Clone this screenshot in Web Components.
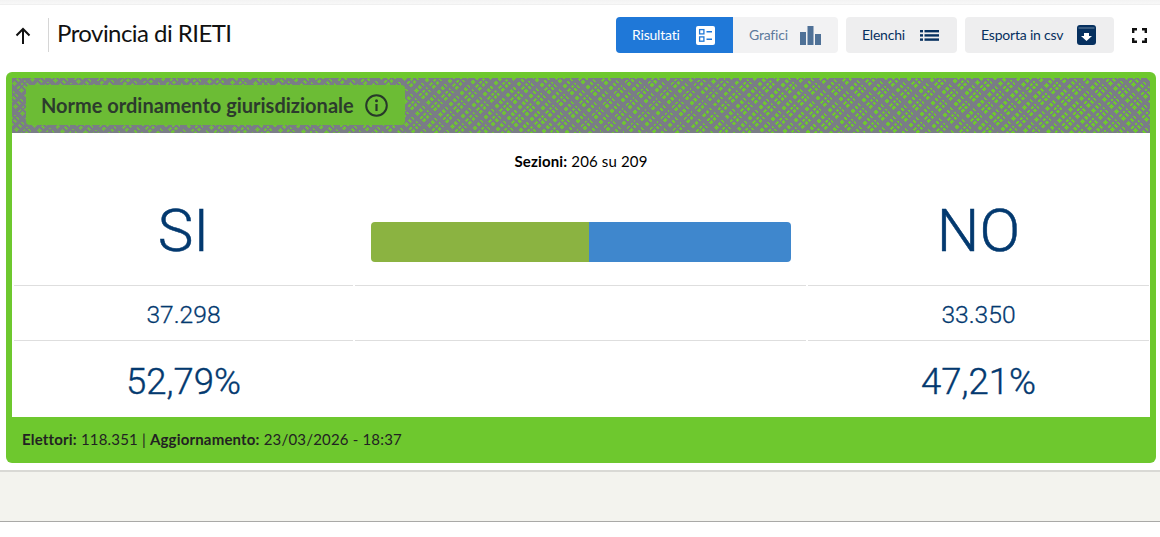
<!DOCTYPE html>
<html lang="it">
<head>
<meta charset="utf-8">
<title>Provincia di RIETI</title>
<style>
    html, body { margin: 0; padding: 0; background: #fff; }
    body { font-family: Lato, "Open Sans", sans-serif; color: #111; }
</style>
</head>
<body>
<page-view>
    <page-toolbar slot="toolbar" heading="Provincia di RIETI">
        <tool-button kind="active" icon="results" style="width:117px">Risultati</tool-button>
        <tool-button kind="muted" icon="bars" class="joined" style="width:105px">Grafici</tool-button>
        <tool-button icon="list" style="width:111px">Elenchi</tool-button>
        <tool-button icon="archive" style="width:149px">Esporta in csv</tool-button>
    </page-toolbar>
    <result-card slot="card" heading="Norme ordinamento giurisdizionale">
        <vote-table yes="37.298" no="33.350" yes-pct="52,79%" no-pct="47,21%"></vote-table>
        <span slot="footer"><b>Elettori:</b> 118.351 | <b>Aggiornamento:</b> 23/03/2026 - 18:37</span>
    </result-card>
</page-view>

<script>
const ICONS = {
    up: `<svg width="18" height="18" viewBox="0 0 18 18" fill="none" stroke="#111" stroke-width="2"><path d="M9 17V2M2.500 8.500 9 2l6.500 6.500"/></svg>`,
    results: `<svg width="19" height="19" viewBox="0 0 19 19"><rect width="19" height="19" rx="2" fill="#fff"/><g fill="none" stroke="#1f78d8" stroke-width="1.300"><rect x="3.600" y="3.600" width="4.300" height="4.300"/><rect x="3.600" y="10.900" width="4.300" height="4.300"/></g><path d="M10.500 5h5.500v1.600h-5.500zM10.500 12.400h5.500V14h-5.500z" fill="#1f78d8"/></svg>`,
    bars: `<svg width="21" height="19" viewBox="0 0 21 19" fill="#4f7197"><rect y="6" width="6" height="13"/><rect x="7.500" width="6" height="19"/><rect x="15" y="8" width="6" height="11"/></svg>`,
    list: `<svg width="19" height="11" viewBox="0 0 19 11" fill="#06305f"><rect y="0" width="3" height="2.400"/><rect y="4.200" width="3" height="2.400"/><rect y="8.400" width="3" height="2.400"/><rect x="4.500" y="0" width="14.500" height="2.400"/><rect x="4.500" y="4.200" width="14.500" height="2.400"/><rect x="4.500" y="8.400" width="14.500" height="2.400"/></svg>`,
    archive: `<svg width="19" height="20" viewBox="0 0 19 20"><rect width="19" height="20" rx="3" fill="#06305f"/><path d="M1.500 3h16" stroke="#fff" stroke-width=".7" opacity=".6"/><path d="M7 8h5v3h3l-5.500 5L4 11h3z" fill="#fff"/></svg>`,
    expand: `<svg width="15" height="15" viewBox="0 0 15 15" fill="none" stroke="#111" stroke-width="2.400"><path d="M1.200 5V1.200H5M10 1.200h3.800V5M13.800 10v3.800H10M5 13.800H1.200V10"/></svg>`,
    info: `<svg width="23" height="23" viewBox="0 0 23 23" fill="none" stroke="#27392a"><circle cx="11.500" cy="11.500" r="10.300" stroke-width="2"/><path d="M11.500 10v7" stroke-width="2.200"/><circle cx="11.500" cy="6.800" r="1.500" fill="#27392a" stroke="none"/></svg>`
};

class PageView extends HTMLElement {
    constructor() {
        super();
        this.attachShadow({ mode: 'open' }).innerHTML = `
            <style>
                :host { display: block; width: 1160px; }
                .top { height: 4px; background: linear-gradient(#f3f3f3, #f8f8f8); border-bottom: 1px solid #f0f0f0; }
                .main { padding: 0 4px 0 6px; }
                .band {
                    margin-top: 7px;
                    height: 49px;
                    background: #f3f3ee;
                    border-top: 2px solid #d9d9d5;
                    border-bottom: 1px solid #a9a9a7;
                    box-shadow: 0 2px 3px rgba(0,0,0,.07);
                }
            </style>
            <div class="top"></div>
            <slot name="toolbar"></slot>
            <div class="main"><slot name="card"></slot></div>
            <div class="band"></div>
        `;
    }
}

class PageToolbar extends HTMLElement {
    constructor() {
        super();
        this.attachShadow({ mode: 'open' }).innerHTML = `
            <style>
                :host { display: flex; align-items: center; height: 67px; padding: 0 13px 7px 14px; box-sizing: border-box; }
                .back { display: flex; width: 18px; margin-right: 16px; margin-top: 1px; }
                .sep { width: 1px; height: 34px; background: #d6d6d6; margin-right: 8px; }
                h1 { margin: 0 0 4px; font-size: 24px; font-weight: 400; line-height: 30px; color: #111; letter-spacing: -.55px; flex: 1; }
                .tools { display: flex; gap: 8px; }
                .full { display: flex; margin-left: 18px; }
                ::slotted(.joined) { margin-left: -8px; }
            </style>
            <span class="back">${ICONS.up}</span>
            <span class="sep"></span>
            <h1>${this.getAttribute('heading')}</h1>
            <div class="tools"><slot></slot></div>
            <span class="full">${ICONS.expand}</span>
        `;
    }
}

class ToolButton extends HTMLElement {
    constructor() {
        super();
        const kind = this.getAttribute('kind') || 'plain';
        this.attachShadow({ mode: 'open' }).innerHTML = `
            <style>
                :host { display: flex; }
                div {
                    flex: 1; display: flex; align-items: center; justify-content: space-between;
                    height: 36px; padding: 0 18px 0 16px;
                    font-size: 14px; letter-spacing: -.2px; border-radius: 4px;
                    background: #eeeeef; color: #06305f;
                }
                span { padding-bottom: 2px; }
                .active { background: #1f78d8; color: #fff; border-radius: 4px 0 0 4px; }
                .muted { background: #f2f2f3; color: #5d7a9c; border-radius: 0 4px 4px 0; padding-right: 17px; }
                svg { display: block; }
            </style>
            <div class="${kind}"><span><slot></slot></span>${ICONS[this.getAttribute('icon')]}</div>
        `;
    }
}

class ResultCard extends HTMLElement {
    constructor() {
        super();
        this.attachShadow({ mode: 'open' }).innerHTML = `
            <style>
                :host { display: block; width: 1150px; background: #6ec82e; border-radius: 6px; padding: 6px 6px 0; box-sizing: border-box; }
                .hatch {
                    height: 55px; padding: 7px 14px 0; box-sizing: border-box;
                    background-color: #6ec82e;
                    background-image:
                        linear-gradient(90deg, rgba(122,125,134,.25), rgba(122,125,134,.08) 45%, rgba(122,125,134,0) 75%),
                        repeating-linear-gradient(45deg, #7a7d86 0 4px, transparent 4px 7.500px, #7a7d86 7.500px 9.500px, transparent 9.500px 12px, #7a7d86 12px 14px, transparent 14px 15.500px),
                        repeating-linear-gradient(-45deg, #7a7d86 0 3px, transparent 3px 6.500px, #7a7d86 6.500px 10.500px, transparent 10.500px 13.500px, #7a7d86 13.500px 15px, transparent 15px 17px);
                }
                .chip {
                    display: inline-flex; align-items: center; gap: 11px; height: 40px; padding: 0 0 0 15px; width: 379px; box-sizing: border-box;
                    background: #6cbc35; border-radius: 4px;
                    font-size: 20px; font-weight: 700; color: #2c3b2d; white-space: nowrap;
                }
                .chip svg { display: block; flex: none; }
                .body { background: #fff; }
                footer { height: 46px; padding: 0 10px 2px; box-sizing: border-box; display: flex; align-items: center; font-size: 15px; color: #222; letter-spacing: .18px; }
                svg { display: block; }
            </style>
            <div class="hatch"><div class="chip"><span>${this.getAttribute('heading')}</span>${ICONS.info}</div></div>
            <div class="body"><slot></slot></div>
            <footer><slot name="footer"></slot></footer>
        `;
    }
}

class VoteTable extends HTMLElement {
    constructor() {
        super();
        const a = n => this.getAttribute(n);
        this.attachShadow({ mode: 'open' }).innerHTML = `
            <style>
                :host { display: block; color: #03396f; }
                .sections { height: 56px; display: flex; align-items: center; justify-content: center; font-size: 15px; color: #000; letter-spacing: .15px; }
                .grid { display: grid; grid-template-columns: 339px 451px 341px; grid-template-rows: 97px 55px 76px; column-gap: 2px; padding-left: 2px; font-family: Roboto, sans-serif; font-weight: 300; }
                .cell { display: flex; align-items: center; justify-content: center; text-align: center; }
                .line { border-bottom: 1px solid #dedede; }
                .big { font-size: 60px; padding-bottom: 14px; -webkit-text-stroke: .5px #03396f; }
                .mid { font-size: 24.600px; padding-top: 2px; -webkit-text-stroke: .3px #03396f; }
                .pct { font-size: 36.500px; padding-top: 4px; -webkit-text-stroke: .4px #03396f; }
                .bar { display: flex; width: 420px; height: 40px; margin-top: 10px; border-radius: 4px; overflow: hidden; }
                .bar i:first-child { width: 218px; background: #8bb341; }
                .bar i:last-child { flex: 1; background: #3f87cd; }
            </style>
            <div class="sections"><span><b>Sezioni:</b> 206 su 209</span></div>
            <div class="grid">
                <div class="cell big line">SI</div>
                <div class="cell line"><div class="bar"><i></i><i></i></div></div>
                <div class="cell big line">NO</div>
                <div class="cell mid line">${a('yes')}</div>
                <div class="cell line"></div>
                <div class="cell mid line">${a('no')}</div>
                <div class="cell pct">${a('yes-pct')}</div>
                <div class="cell"></div>
                <div class="cell pct">${a('no-pct')}</div>
            </div>
        `;
    }
}

customElements.define('page-view', PageView);
customElements.define('page-toolbar', PageToolbar);
customElements.define('tool-button', ToolButton);
customElements.define('result-card', ResultCard);
customElements.define('vote-table', VoteTable);
</script>
</body>
</html>
